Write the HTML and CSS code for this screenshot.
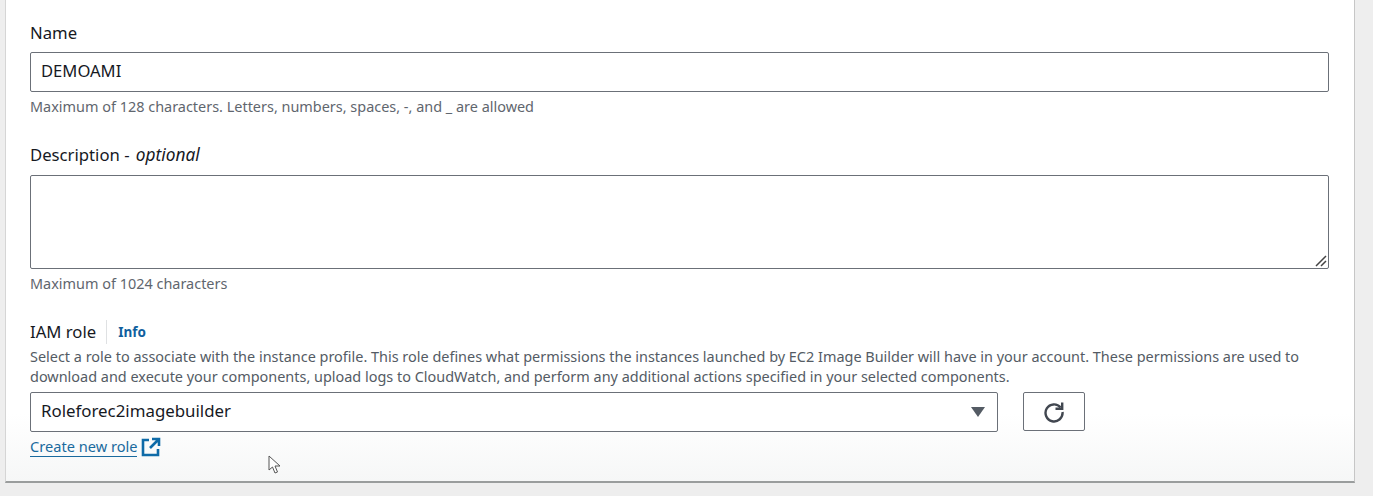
FILE: index.html
```html
<!DOCTYPE html>
<html lang="en">
<head>
<meta charset="UTF-8" />
<title>Image Builder - Recipe</title>
<link rel="stylesheet" href="styles.css">
</head>
<body>

<div class="card">
  <div class="field field-name">
    <label class="label">Name</label>
    <div class="input">DEMOAMI</div>
    <p class="hint">Maximum of 128 characters. Letters, numbers, spaces, -, and _ are allowed</p>
  </div>

  <div class="field field-desc">
    <label class="label">Description - <i>optional</i></label>
    <div class="textarea">
      <svg class="grip" width="12" height="12" viewBox="0 0 12 12">
        <path d="M1 11 L11 1 M6 11 L11 6" stroke="#444" stroke-width="1.5" fill="none" />
      </svg>
    </div>
    <p class="hint">Maximum of 1024 characters</p>
  </div>

  <div class="field field-role">
    <div class="label-row">
      <label class="label">IAM role</label>
      <a class="info">Info</a>
    </div>
    <p class="desc">Select a role to associate with the instance profile. This role defines what permissions the instances launched by EC2 Image Builder will have in your account. These permissions are used to download and execute your components, upload logs to CloudWatch, and perform any additional actions specified in your selected components.</p>
    <div class="select-row">
      <div class="select">
        <span>Roleforec2imagebuilder</span>
        <svg width="14" height="10" viewBox="0 0 14 10"><path d="M0 0 H14 L7 10 Z" fill="#545b64" /></svg>
      </div>
      <button class="refresh">
        <svg width="22" height="22" viewBox="0 0 22 22">
          <path d="M17.6 6.5 A8.5 8.5 0 1 0 19.5 11" stroke="#414750" stroke-width="2.4" fill="none" />
          <path d="M12.5 7.8 H19.2 V1.5" stroke="#414750" stroke-width="2.4" fill="none" />
        </svg>
      </button>
    </div>
    <div class="create-row">
      <a class="create">Create new role</a>
      <svg width="20" height="20" viewBox="0 0 20 20">
        <path d="M8 3 H2 V18 H17 V12" stroke="#0f6ba8" stroke-width="2.6" fill="none" />
        <path d="M11 2 H18 V9 M18 2 L9 11" stroke="#0f6ba8" stroke-width="2.6" fill="none" />
      </svg>
    </div>
  </div>

  <svg class="cursor" width="14" height="20" viewBox="0 0 14 20">
    <path d="M1 1 V15 L4.5 12 L7 18 L9.5 17 L7 11 H12 Z" fill="#fff" stroke="#555" stroke-width="1" />
  </svg>
</div>

</body>
</html>
```
FILE: styles.css
```css
html, body {
  margin: 0;
  height: 496px;
  overflow: hidden;
}
body {
  font-family: "Noto Sans", sans-serif;
  background: #eeeeee;
  color: #16191f;
}
.card {
  position: relative;
  box-sizing: border-box;
  width: 1350px;
  height: 483px;
  margin-left: 5px;
  padding: 0 24px;
  background: linear-gradient(180deg, #fff 0%, #fff 86%, #f6f7f7 100%);
  border-bottom: 2px solid #9a9d9d;
  border-left: 1px solid #d5d5d5;
  border-right: 1px solid #c6c6c6;
}
.field-name { padding-top: 22px; }
.field-desc { padding-top: 28px; }
.field-role { padding-top: 27px; }
.label {
  display: block;
  font-size: 16.7px;
  line-height: 22px;
}
.label i {
  font-size: 17.3px;
  margin-left: 2px;
}
.input, .textarea, .select {
  box-sizing: border-box;
  border: 1px solid #6b7078;
  border-radius: 2px;
  background: #fff;
  font-size: 16.6px;
}
.input {
  width: 1299px;
  height: 40px;
  margin-top: 8px;
  padding: 0 10px;
  line-height: 36px;
}
.textarea {
  position: relative;
  width: 1299px;
  height: 94px;
  margin-top: 9px;
}
.grip {
  position: absolute;
  right: 1px;
  bottom: 1px;
}
.hint {
  margin: 5px 0 0;
  font-size: 14.45px;
  line-height: 19px;
  color: #5f666e;
}
.label-row {
  display: flex;
  align-items: center;
  height: 24px;
}
.info {
  margin-left: 10px;
  padding-left: 11px;
  border-left: 1px solid #dfe1e3;
  font-size: 13.5px;
  font-weight: 700;
  line-height: 24px;
  color: #0f5f9e;
}
.desc {
  width: 1299px;
  margin: 3px 0 0;
  font-size: 14.45px;
  line-height: 20px;
  color: #545b64;
}
.select-row {
  display: flex;
  gap: 25px;
  margin-top: 5px;
}
.select {
  display: flex;
  align-items: center;
  justify-content: space-between;
  width: 968px;
  height: 40px;
  padding: 0 12px 0 10px;
  font-size: 16.85px;
}
.select span {
  margin-bottom: 3px;
}
.refresh {
  display: flex;
  align-items: center;
  justify-content: center;
  width: 62px;
  height: 39px;
  padding: 0;
  background: #fff;
  border: 1px solid #6b7078;
  border-radius: 2px;
}
.create-row {
  display: flex;
  align-items: center;
  gap: 4px;
  margin-top: 4px;
}
.create {
  font-size: 14.6px;
  line-height: 20px;
  color: #1a6a9e;
  border-bottom: 1px solid #1a6a9e;
}
.cursor {
  position: absolute;
  left: 262px;
  top: 455px;
}
```
